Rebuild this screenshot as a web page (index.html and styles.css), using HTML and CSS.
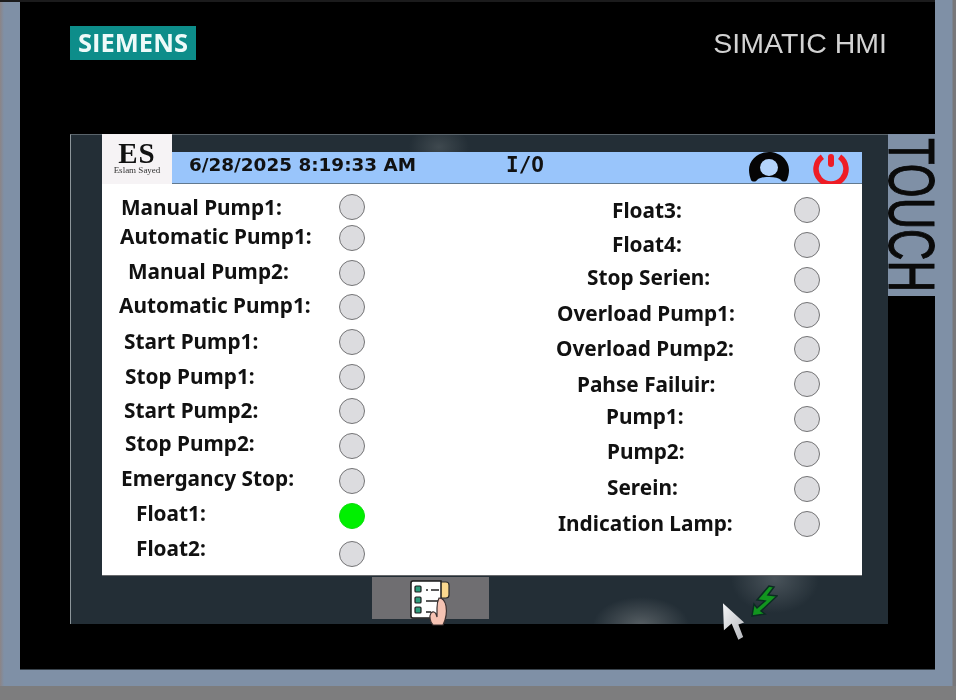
FILE: index.html
```html
<!DOCTYPE html>
<html lang="en">
<head>
<meta charset="utf-8">
<title>SIMATIC HMI I/O</title>
<link rel="stylesheet" href="styles.css">
</head>
<body>
<div class="device">
  <div class="bezel">
    <header class="brand">
      <div class="siemens">SIEMENS</div>
      <div class="simatic">SIMATIC HMI</div>
    </header>
    <div class="stage">
      <main class="screen">
        <div class="top">
          <div class="logo"><span class="logo-es">ES</span><span class="logo-name">Eslam Sayed</span></div>
          <div class="bar">
            <span class="date">6/28/2025 8:19:33 AM</span>
            <span class="title">I/O</span>
            <svg class="user" viewBox="0 0 40 32" aria-hidden="true">
              <path fill="#050505" d="M20 0C9 0 0 8 0 18c0 4 1 7 2 10 1 2 5 2 6 0 2-2 6-3 12-3s10 1 12 3c1 2 5 2 6 0 1-3 2-6 2-10C40 8 31 0 20 0z"/>
              <ellipse cx="20" cy="15.500" rx="9" ry="8.500" fill="#b4d4fb"/>
            </svg>
            <svg class="power" viewBox="0 0 38 32" aria-hidden="true">
              <path fill="none" stroke="#ee1c25" stroke-width="5.500" d="M9.400 4.700A15 15 0 1 0 26.600 4.700"/>
              <rect x="15" y="2" width="6" height="13" rx="3" fill="#ee1c25"/>
            </svg>
          </div>
        </div>
        <section class="panel">
          <div class="col left">
            <div class="row"><span class="label">Manual Pump1:</span><i class="led"></i></div>
            <div class="row"><span class="label">Automatic Pump1:</span><i class="led"></i></div>
            <div class="row"><span class="label">Manual Pump2:</span><i class="led"></i></div>
            <div class="row"><span class="label">Automatic Pump1:</span><i class="led"></i></div>
            <div class="row"><span class="label">Start Pump1:</span><i class="led"></i></div>
            <div class="row"><span class="label">Stop Pump1:</span><i class="led"></i></div>
            <div class="row"><span class="label">Start Pump2:</span><i class="led"></i></div>
            <div class="row"><span class="label">Stop Pump2:</span><i class="led"></i></div>
            <div class="row"><span class="label">Emergancy Stop:</span><i class="led"></i></div>
            <div class="row"><span class="label">Float1:</span><i class="led on"></i></div>
            <div class="row"><span class="label">Float2:</span><i class="led"></i></div>
          </div>
          <div class="col right">
            <div class="row"><span class="label">Float3:</span><i class="led"></i></div>
            <div class="row"><span class="label">Float4:</span><i class="led"></i></div>
            <div class="row"><span class="label">Stop Serien:</span><i class="led"></i></div>
            <div class="row"><span class="label">Overload Pump1:</span><i class="led"></i></div>
            <div class="row"><span class="label">Overload Pump2:</span><i class="led"></i></div>
            <div class="row"><span class="label">Pahse Failuir:</span><i class="led"></i></div>
            <div class="row"><span class="label">Pump1:</span><i class="led"></i></div>
            <div class="row"><span class="label">Pump2:</span><i class="led"></i></div>
            <div class="row"><span class="label">Serein:</span><i class="led"></i></div>
            <div class="row"><span class="label">Indication Lamp:</span><i class="led"></i></div>
          </div>
        </section>
        <footer class="foot">
          <div class="menu-btn">
            <svg class="list-icon" viewBox="0 0 42 46" aria-hidden="true">
              <path fill="#fbd98f" stroke="#2a2a2a" stroke-width="1.200" d="M31 2h6a3 3 0 0 1 3 3v10a3 3 0 0 1-3 3h-6z"/>
              <path fill="#fff" stroke="#1a1a1a" stroke-width="1.500" d="M4 1h28v37H4a2 2 0 0 1-2-2V3a2 2 0 0 1 2-2z"/>
              <g fill="#2f9c7d" stroke="#1d1d1d" stroke-width="1.200">
                <rect x="6" y="6" width="6" height="6" rx="1"/>
                <rect x="6" y="17" width="6" height="6" rx="1"/>
                <rect x="6" y="27" width="6" height="6" rx="1"/>
              </g>
              <path stroke="#222" stroke-width="1.500" d="M17 10h2M22 10h8M17 21h12M17 32h5"/>
              <path fill="#f6c3b3" stroke="#3a2f2f" stroke-width="1.200" d="M24 45c-3-3-4-9-2-12 2-2 4-1 5 1l1 3V28c0-2 1-8 2-10 3 0 6 3 7 8 1 6 0 13-3 19z"/>
            </svg>
          </div>
          <svg class="bolt" viewBox="0 0 28 34" aria-hidden="true">
            <path fill="#12951f" stroke="#0c2b22" stroke-width="1.500" d="M19 1 7 15l8 1-8 7-3-4-2 12 13-2-4-3L27 11l-9-1 6-8z"/>
          </svg>
        </footer>
      </main>
      <aside class="touch">
        <svg class="touch-svg" viewBox="0 0 47 162" role="img" aria-label="TOUCH">
          <text class="touch-text" transform="translate(1 4) rotate(90)" textLength="154" lengthAdjust="spacingAndGlyphs">TOUCH</text>
        </svg>
      </aside>
    </div>
  </div>
  <svg class="cursor" viewBox="0 0 26 42" aria-hidden="true">
    <defs>
      <linearGradient id="cursor-fill" x1="0" y1="0" x2="1" y2="1">
        <stop offset="0" stop-color="#f4f5f7"/>
        <stop offset="1" stop-color="#b6b8bd"/>
      </linearGradient>
    </defs>
    <path fill="url(#cursor-fill)" d="M1 2l1 28 8-7 7 17 5-3-5-13 6-2z"/>
  </svg>
</div>
</body>
</html>
```
FILE: styles.css
```css
* { box-sizing: border-box; }
html, body { margin: 0; height: 700px; overflow: hidden; background: #7d7d7e; }
.device {
  position: relative;
  width: 956px;
  height: 686px;
  padding: 2px 21px 16px 20px;
  background: linear-gradient(90deg, #8b8486 0, #7f90a6 4px, #7f90a6 952px, #77777a 953px);
  filter: blur(.35px);
}
.device::before {
  content: "";
  position: absolute;
  left: 0;
  right: 21px;
  top: 0;
  height: 2px;
  background: #1b1b1c;
}
.bezel { position: relative; height: 668px; background: #000; display: flex; flex-direction: column; border-bottom: 1px solid #39434c; }
.brand { height: 132px; display: flex; justify-content: space-between; align-items: flex-start; padding: 24px 48px 0 50px; }
.siemens {
  width: 126px;
  height: 34px;
  background: #0d8d8a;
  color: #eefaf9;
  font: 700 25.500px/33px "Open Sans", sans-serif;
  text-align: center;
}
.simatic { margin-top: 2px; color: #d2d2d2; font: 400 28.500px/30px "Liberation Sans", sans-serif; }
.stage { display: flex; margin-left: 50px; align-items: flex-start; }
.screen {
  width: 818px;
  height: 490px;
  padding-left: 32px;
  display: flex;
  flex-direction: column;
  border-top: 1px solid #5a646b;
  border-left: 1px solid #8d969b;
  background:
    radial-gradient(ellipse 30px 22px at 368px 12px, #3f494f, transparent),
    radial-gradient(ellipse 48px 28px at 570px 490px, #565e63, transparent),
    radial-gradient(ellipse 44px 34px at 704px 444px, #49535a, transparent),
    #232e36;
}
.top { display: flex; width: 760px; margin-left: -1px; margin-top: -1px; height: 50px; }
.logo {
  width: 70px;
  height: 50px;
  background: #f6f3f5;
  color: #111;
  display: flex;
  flex-direction: column;
  align-items: center;
  font-family: "Liberation Serif", serif;
  padding-top: 7px;
}
.logo-es { font-size: 29px; line-height: 25px; font-weight: 700; letter-spacing: 1px; }
.logo-name { font-size: 9px; line-height: 9px; color: #333; white-space: nowrap; }
.bar {
  flex: 1;
  margin-top: 18px;
  height: 32px;
  background: #99c5fb;
  border-bottom: 1px solid #62798f;
  display: flex;
  align-items: flex-start;
  color: #111;
  font: 700 18.400px/25px "DejaVu Sans", sans-serif;
}
.date { margin-left: 17px; width: 317px; flex: none; white-space: nowrap; }
.title { width: 243px; flex: none; font: 700 21px/27px "DejaVu Sans Mono", monospace; }
.user { width: 40px; height: 32px; flex: none; }
.power { width: 38px; height: 32px; margin-left: 24px; flex: none; }
.panel { display: grid; grid-template-columns: 380px 380px; width: 760px; height: 392px; margin-left: -1px; background: #fff; border-bottom: 1px solid #67696c; }
.col { display: flex; flex-direction: column; }
.left { padding-top: 10px; }
.right { padding-top: 13px; }
.row {
  display: grid;
  grid-template-rows: 26px;
  height: 26px;
  align-items: center;
  margin-top: var(--gap, 9px);
}
.left .row { grid-template-columns: 237px 26px; }
.right .row { grid-template-columns: 312px 26px; }
.label {
  padding-left: var(--x);
  margin-bottom: var(--dy, 0);
  color: #111;
  font: 700 20.800px/24px "Noto Sans", sans-serif;
  white-space: nowrap;
}
.led { display: block; width: 26px; height: 26px; border-radius: 50%; background: #dcdcdf; border: 1.500px solid #747476; }
.led.on { background: #00f000; border-color: #0bdc0b; }
.left .row:nth-child(1) { --gap: 0; --x: 19px; }
.left .row:nth-child(2) { --gap: 5px; --x: 18px; --dy: 4px; }
.left .row:nth-child(3) { --x: 26px; --dy: 4px; }
.left .row:nth-child(4) { --gap: 8px; --x: 17px; --dy: 4px; }
.left .row:nth-child(5) { --x: 22px; --dy: 2px; }
.left .row:nth-child(6) { --x: 23px; --dy: 2px; }
.left .row:nth-child(7) { --gap: 8px; --x: 22px; --dy: 2px; }
.left .row:nth-child(8) { --x: 23px; --dy: 6px; }
.left .row:nth-child(9) { --x: 19px; --dy: 6px; }
.left .row:nth-child(10) { --x: 34px; --dy: 6px; }
.left .row:nth-child(11) { --gap: 12px; --x: 34px; --dy: 12px; }
.right .row:nth-child(1) { --gap: 0; --x: 130px; }
.right .row:nth-child(2) { --x: 130px; --dy: 2px; }
.right .row:nth-child(3) { --x: 105px; --dy: 6px; }
.right .row:nth-child(4) { --x: 75px; --dy: 4px; }
.right .row:nth-child(5) { --gap: 8px; --x: 74px; --dy: 2px; }
.right .row:nth-child(6) { --x: 95px; }
.right .row:nth-child(7) { --x: 124px; --dy: 6px; }
.right .row:nth-child(8) { --x: 125px; --dy: 6px; }
.right .row:nth-child(9) { --x: 125px; --dy: 4px; }
.right .row:nth-child(10) { --x: 76px; --dy: 2px; }
.foot { display: flex; align-items: flex-start; padding: 1px 0 0 270px; margin-left: -1px; }
.menu-btn { width: 117px; height: 42px; background: #6f6e71; display: flex; justify-content: center; padding-top: 3px; padding-right: 1px; }
.list-icon { width: 42px; height: 46px; flex: none; }
.bolt { width: 28px; height: 34px; margin: 8px 0 0 261px; flex: none; }
.touch { width: 47px; height: 162px; background: #7f90a6; }
.touch-svg { display: block; width: 47px; height: 162px; overflow: visible; }
.touch-text {
  font: 400 64px "Liberation Sans", sans-serif;
  fill: #0a0a0a;
  stroke: #0a0a0a;
  stroke-width: 1px;
}
.cursor { position: absolute; left: 722px; top: 601px; width: 25px; height: 41px; }
```
